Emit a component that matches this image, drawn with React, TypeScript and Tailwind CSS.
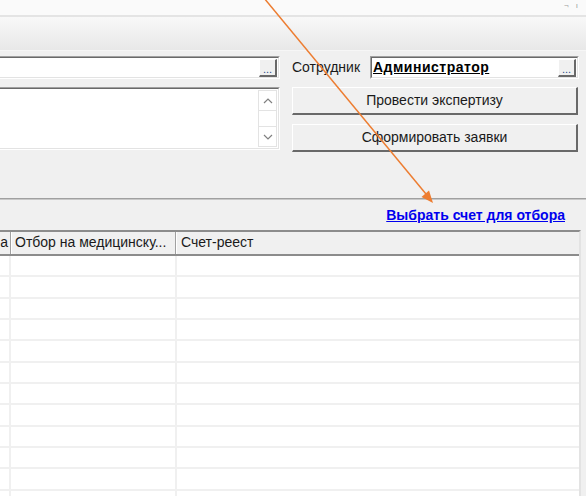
import React from "react";

function Sunken({ className = "", children }: { className?: string; children?: React.ReactNode }) {
  return (
    <div className={"border border-t-[#a0a0a0] border-l-[#a0a0a0] border-b-white border-r-white " + className}>
      <div className="w-full h-full border border-t-[#696969] border-l-[#696969] border-b-[#e3e3e3] border-r-[#e3e3e3] bg-white flex">
        {children}
      </div>
    </div>
  );
}

function Dots() {
  return (
    <div className="ml-auto mt-[1px] mr-[1px] w-[18px] h-[18px] bg-[#f0f0f0] border-r-2 border-b-2 border-r-[#696969] border-b-[#696969] border-t border-l border-t-white border-l-white flex items-end justify-center pb-[1px] text-[11px] leading-[10px] text-[#2a4f8a] tracking-[0px]">
      ...
    </div>
  );
}

function Button({ label }: { label: string }) {
  return (
    <div className="h-[28px] w-[286px] bg-[#f0f0f0] border-t border-l border-t-white border-l-white border-r-2 border-b-2 border-r-[#696969] border-b-[#696969] flex items-center justify-center text-[14px] text-[#1a1a1a]">
      {label}
    </div>
  );
}

export default function App() {
  const rows = Array.from({ length: 12 });
  return (
    <div className="relative w-[586px] h-[496px] overflow-hidden bg-[#f0f0f0] text-black font-['Liberation_Sans',Arial,sans-serif]">
      {/* top strip */}
      <div className="h-[15px] bg-[#fafafa] flex justify-end pr-[8px] gap-[7px] items-start text-[8px] leading-[12px] text-[#9a9a9a]">
        <span>¬</span>
        <span>ı</span>
      </div>
      <div className="h-[2px] bg-[#e4e4e4]" />
      <div className="h-[34px] bg-linear-to-b from-[#f8f8f8] to-[#e8e8e8] border-b border-b-[#f6f6f6]" />

      {/* main controls */}
      <div className="flex pt-[5px] gap-[12px]">
        <div className="w-[283px] -ml-[3px] flex flex-col gap-[8px]">
          <Sunken className="h-[23px]">
            <Dots />
          </Sunken>
          <Sunken className="h-[63px]">
            <div className="ml-auto my-[1px] mr-[1px] w-[19px] flex flex-col border border-[#e3e3e3]">
              <div className="h-[20px] flex items-center justify-center border-b border-[#e3e3e3]">
                <svg width="10" height="6" viewBox="0 0 10 6">
                  <path d="M1 5 L5 1 L9 5" fill="none" stroke="#808080" strokeWidth="1.2" />
                </svg>
              </div>
              <div className="flex-1" />
              <div className="h-[20px] flex items-center justify-center border-t border-[#e3e3e3]">
                <svg width="10" height="6" viewBox="0 0 10 6">
                  <path d="M1 1 L5 5 L9 1" fill="none" stroke="#808080" strokeWidth="1.2" />
                </svg>
              </div>
            </div>
          </Sunken>
        </div>
        <div className="flex flex-col">
          <div className="flex items-center h-[23px]">
            <span className="w-[78px] text-[14px] text-[#1a1a1a]">Сотрудник</span>
            <Sunken className="h-[23px] w-[209px]">
              <span className="pl-[1px] font-bold underline text-[14px] leading-[19px] tracking-[0.5px]">Администратор</span>
              <Dots />
            </Sunken>
          </div>
          <div className="mt-[8px] flex flex-col gap-[9px]">
            <Button label="Провести экспертизу" />
            <Button label="Сформировать заявки" />
          </div>
        </div>
      </div>

      {/* separator */}
      <div className="mt-[46px] border-t border-b border-t-[#a0a0a0] border-b-[#c8c8c8]" />

      {/* link row */}
      <div className="h-[30px] flex items-center justify-end pr-[21px]">
        <span className="text-[14px] font-bold underline text-[#0000ee]">Выбрать счет для отбора</span>
      </div>

      {/* grid */}
      <div className="w-[581px] border-t-2 border-t-[#8c8c8c] border-r-2 border-r-[#e3e3e3] bg-white">
        <div className="h-[24px] flex bg-[#f0f0f0] border-b-2 border-b-[#8c8c8c] text-[14px] text-[#1a1a1a] leading-[20px]">
          <div className="w-[11px] border-r border-r-[#a0a0a0] flex justify-end pr-[2px] overflow-hidden">а</div>
          <div className="w-[165px] border-l border-l-white border-r border-r-[#a0a0a0] pl-[3px] whitespace-nowrap overflow-hidden">Отбор на медицинску...</div>
          <div className="flex-1 border-l border-l-white pl-[4px]">Счет-реест</div>
        </div>
        {rows.map((_, i) => (
          <div key={i} className="h-[21.33px] flex border-b-2 border-b-[#f0f0f0]">
            <div className="w-[11px] border-r-2 border-r-[#f0f0f0]" />
            <div className="w-[166px] border-r-2 border-r-[#f0f0f0]" />
            <div className="flex-1" />
          </div>
        ))}
      </div>

      {/* orange arrow overlay */}
      <svg className="absolute left-0 top-0 pointer-events-none" width="586" height="496" viewBox="0 0 586 496">
        <line x1="264" y1="-2" x2="426" y2="194" stroke="#ed7d31" strokeWidth="1.5" />
        <polygon points="433,203 421.5,197 429,190.5" fill="#ed7d31" />
      </svg>
    </div>
  );
}
